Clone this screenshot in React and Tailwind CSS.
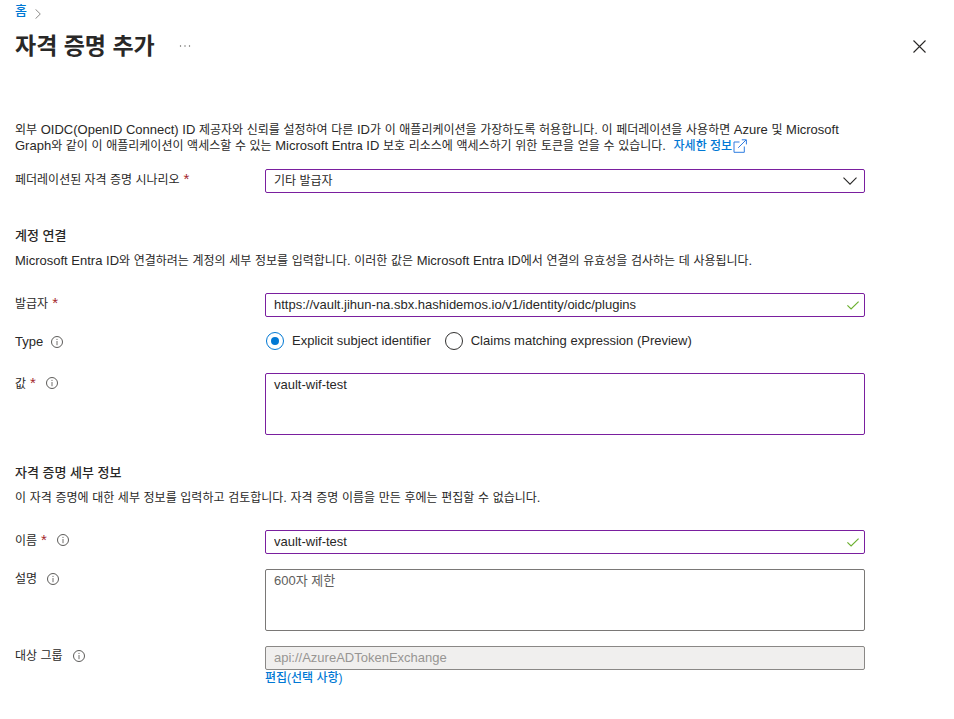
import React, { useState } from "react";

/* Hangul runs are set one step smaller than the Latin text around them. */
function Mixed({ children }) {
  return children
    .split(/([\uAC00-\uD7A3]+)/)
    .map((part, i) =>
      i % 2 ? (
        <span key={i} className="text-[12px]">
          {part}
        </span>
      ) : (
        part
      )
    );
}

function InfoIcon() {
  return (
    <svg viewBox="0 0 12 12" className="h-3 w-3 shrink-0" fill="none" aria-hidden="true">
      <circle cx="6" cy="6" r="5.5" stroke="#4a4846" strokeWidth="0.9" />
      <path d="M6 5v4.2" stroke="#605e5c" strokeWidth="0.9" />
      <circle cx="6" cy="3.3" r="0.6" fill="#605e5c" />
    </svg>
  );
}

function CheckIcon() {
  return (
    <svg
      viewBox="0 0 12 9"
      className="pointer-events-none absolute top-2 right-[6px] h-[9px] w-3"
      fill="none"
      aria-hidden="true"
    >
      <path d="M0.4 4.4L4.1 8L11.6 0.6" stroke="#6bb02f" strokeWidth="1.2" />
    </svg>
  );
}

function Label({ text, htmlFor, id, required, info, latin }) {
  const Tag = htmlFor ? "label" : "span";
  return (
    <div className="flex h-5 w-[250px] shrink-0 items-center">
      <Tag id={id} htmlFor={htmlFor} className={latin ? "text-[13px]" : "text-[12px]"}>
        {text}
        {required && <span className="ml-1 text-[15px] leading-none text-[#a4262c]">*</span>}
      </Tag>
      {info && (
        <span className={latin ? "ml-2" : "ml-[10px]"}>
          <InfoIcon />
        </span>
      )}
    </div>
  );
}

const box =
  "block w-full rounded-[2px] border px-2 text-[#292827] outline-none placeholder:text-[#605e5c]";

function Radio({ label, value, selected, onChange }) {
  return (
    <label className="flex items-center gap-2 whitespace-nowrap">
      <input
        type="radio"
        name="type"
        value={value}
        checked={selected === value}
        onChange={() => onChange(value)}
        className="h-[18px] w-[18px] appearance-none rounded-full border border-[#323130] bg-white bg-clip-content p-1 checked:border-[#0078d4] checked:bg-[#0078d4]"
      />
      {label}
    </label>
  );
}

function SectionHead({ title, children }) {
  return (
    <div>
      <h2 className="h-5 text-[13px] leading-5 font-medium">{title}</h2>
      <p className="mt-[5px] h-5 leading-5">
        <Mixed>{children}</Mixed>
      </p>
    </div>
  );
}

export default function App() {
  const [type, setType] = useState("explicit");
  return (
    <main
      lang="ko"
      className="min-h-screen bg-white pr-7 pb-8 pl-[15px] font-['Liberation_Sans','Noto_Sans_CJK_KR',sans-serif] text-[13px] leading-4 text-[#292827]"
    >
      <nav className="flex h-[22px] items-center gap-2">
        <a href="#home" className="font-medium text-[#0078d4]">
          홈
        </a>
        <svg viewBox="0 0 6 10" className="mt-[5px] h-[10px] w-[6px]" fill="none" aria-hidden="true">
          <path d="M0.5 0.3L5.3 5L0.5 9.7" stroke="#8a8886" strokeWidth="1" />
        </svg>
      </nav>

      <header className="flex h-12 items-center">
        <h1 className="text-[23px] leading-8 font-semibold">자격 증명 추가</h1>
        <button type="button" aria-label="더 보기" className="ml-5 p-1">
          <svg viewBox="0 0 12 2" className="h-[2px] w-3" fill="#605e5c">
            <circle cx="1.5" cy="1" r="0.7" />
            <circle cx="6" cy="1" r="0.7" />
            <circle cx="10.5" cy="1" r="0.7" />
          </svg>
        </button>
        <button type="button" aria-label="닫기" className="ml-auto">
          <svg viewBox="0 0 13 13" className="h-[13px] w-[13px]" fill="none">
            <path d="M0.5 0.5l12 12M12.5 0.5l-12 12" stroke="#292827" strokeWidth="1.1" />
          </svg>
        </button>
      </header>

      <form className="mt-[52px] max-w-[850px]" onSubmit={(e) => e.preventDefault()}>
        <p>
          <Mixed>
            외부 OIDC(OpenID Connect) ID 제공자와 신뢰를 설정하여 다른 ID가 이 애플리케이션을 가장하도록 허용합니다. 이 페더레이션을 사용하면 Azure 및 Microsoft Graph와 같이 이 애플리케이션이 액세스할 수 있는 Microsoft Entra ID 보호 리소스에 액세스하기 위한 토큰을 얻을 수 있습니다.
          </Mixed>{" "}
          <a href="#learn" className="ml-1 inline-flex items-center text-[12px] font-medium text-[#0078d4]">
            자세한 정보
            <svg viewBox="0 0 14 14" className="ml-px h-[14px] w-[14px]" fill="none" aria-hidden="true">
              <path
                d="M6.5 3H1v10.3h10.3V7.5M5.2 8.8L13 1M8.8 0.8h4.6v4.6"
                stroke="#2f7de0"
                strokeWidth="1"
              />
            </svg>
          </a>
        </p>

        <div className="mt-[15px] flex">
          <Label text="페더레이션된 자격 증명 시나리오" htmlFor="scenario" required />
          <div className="relative flex-1">
            <select id="scenario" className={`${box} h-6 appearance-none border-[#7a1f9f] text-[12px]`}>
              <option>기타 발급자</option>
            </select>
            <svg
              viewBox="0 0 14 8"
              className="pointer-events-none absolute top-2 right-2 h-2 w-[14px]"
              fill="none"
              aria-hidden="true"
            >
              <path d="M0.5 0.6L7 7.1L13.5 0.6" stroke="#292827" strokeWidth="1.1" />
            </svg>
          </div>
        </div>

        <div className="mt-[33px]">
          <SectionHead title="계정 연결">
            Microsoft Entra ID와 연결하려는 계정의 세부 정보를 입력합니다. 이러한 값은 Microsoft Entra ID에서 연결의 유효성을 검사하는 데 사용됩니다.
          </SectionHead>
        </div>

        <div className="mt-[22px] flex">
          <Label text="발급자" htmlFor="issuer" required />
          <div className="relative flex-1">
            <input
              id="issuer"
              type="text"
              defaultValue="https://vault.jihun-na.sbx.hashidemos.io/v1/identity/oidc/plugins"
              className={`${box} h-6 border-[#7a1f9f] pb-[2px] text-[13px]`}
            />
            <CheckIcon />
          </div>
        </div>

        <div className="mt-[15px] flex">
          <Label text="Type" id="type-label" info latin />
          <div
            role="radiogroup"
            aria-labelledby="type-label"
            className="flex h-[18px] flex-1 items-center gap-[14px] pl-px"
          >
            <Radio label="Explicit subject identifier" value="explicit" selected={type} onChange={setType} />
            <Radio label="Claims matching expression (Preview)" value="claims" selected={type} onChange={setType} />
          </div>
        </div>

        <div className="mt-[21px] flex">
          <Label text="값" htmlFor="value" required info />
          <textarea
            id="value"
            defaultValue="vault-wif-test"
            className={`${box} h-[62px] min-w-0 flex-1 resize-none border-[#7a1f9f] py-[3px] text-[13px]`}
          />
        </div>

        <div className="mt-7">
          <SectionHead title="자격 증명 세부 정보">
            이 자격 증명에 대한 세부 정보를 입력하고 검토합니다. 자격 증명 이름을 만든 후에는 편집할 수 없습니다.
          </SectionHead>
        </div>

        <div className="mt-[22px] flex">
          <Label text="이름" htmlFor="name" required info />
          <div className="relative flex-1">
            <input
              id="name"
              type="text"
              defaultValue="vault-wif-test"
              className={`${box} h-6 border-[#7a1f9f] pb-[2px] text-[13px]`}
            />
            <CheckIcon />
          </div>
        </div>

        <div className="mt-[15px] flex">
          <Label text="설명" htmlFor="description" info />
          <textarea
            id="description"
            placeholder="600자 제한"
            className={`${box} h-[62px] min-w-0 flex-1 resize-none border-[#7a7876] py-[3px] text-[13px]`}
          />
        </div>

        <div className="mt-[15px] flex">
          <Label text="대상 그룹" htmlFor="audience" info />
          <div className="flex-1">
            <input
              id="audience"
              type="text"
              disabled
              value="api://AzureADTokenExchange"
              className="block h-6 w-full rounded-[2px] border border-[#8a8886] bg-[#f0efee] px-2 pb-[2px] text-[13px] text-[#979593]"
            />
            <a href="#edit" className="block w-fit text-[12px] font-medium text-[#0078d4]">
              편집(선택 사항)
            </a>
          </div>
        </div>
      </form>
    </main>
  );
}
